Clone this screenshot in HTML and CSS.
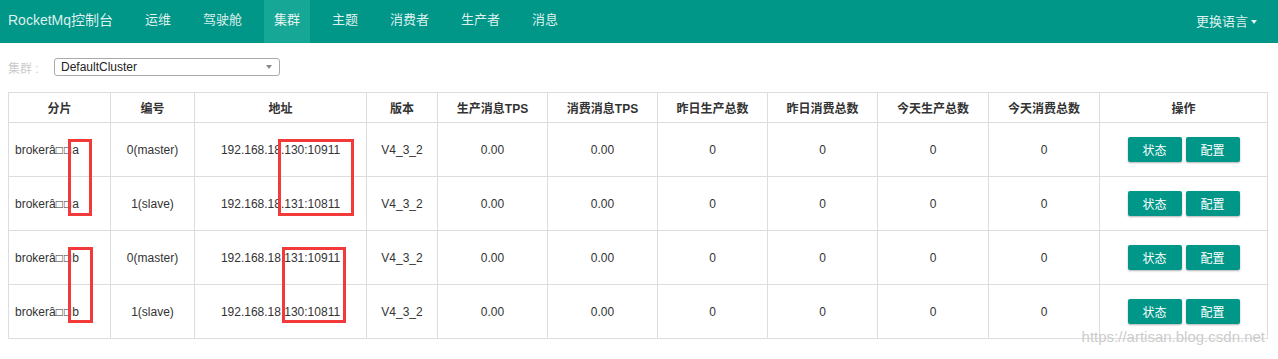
FILE: index.html
```html
<!DOCTYPE html>
<html lang="zh-CN">
<head>
  <meta charset="UTF-8" />
  <title>RocketMq控制台</title>
  <link rel="stylesheet" href="styles.css">
</head>
<body>

  <div class="navbar">
    <div class="brand">RocketMq控制台</div>
    <ul class="nav">
      <li>运维</li>
      <li>驾驶舱</li>
      <li class="active">集群</li>
      <li>主题</li>
      <li>消费者</li>
      <li>生产者</li>
      <li>消息</li>
    </ul>
    <div class="lang">更换语言 <span class="caret"></span></div>
  </div>

  <div class="content">
    <div class="filter">
      <span class="label">集群 :</span>
      <div class="select">
        <span>DefaultCluster</span>
        <span class="caret dark"></span>
      </div>
    </div>

    <div class="table-wrap">
      <table class="cluster">
        <colgroup>
          <col style="width:102px"><col style="width:84px"><col style="width:172px"><col style="width:71px">
          <col style="width:110px"><col style="width:110px"><col style="width:110px"><col style="width:110px">
          <col style="width:111px"><col style="width:111px"><col style="width:168px">
        </colgroup>
        <thead>
          <tr>
            <th>分片</th><th>编号</th><th>地址</th><th>版本</th><th>生产消息TPS</th><th>消费消息TPS</th>
            <th>昨日生产总数</th><th>昨日消费总数</th><th>今天生产总数</th><th>今天消费总数</th><th>操作</th>
          </tr>
        </thead>
        <tbody>
          <tr>
            <td class="left">brokerâ<span class="bad">□□</span>a</td><td>0(master)</td><td>192.168.18.130:10911</td><td>V4_3_2</td>
            <td>0.00</td><td>0.00</td><td>0</td><td>0</td><td>0</td><td>0</td>
            <td><button class="btn">状态</button><button class="btn">配置</button></td>
          </tr>
          <tr>
            <td class="left">brokerâ<span class="bad">□□</span>a</td><td>1(slave)</td><td>192.168.18.131:10811</td><td>V4_3_2</td>
            <td>0.00</td><td>0.00</td><td>0</td><td>0</td><td>0</td><td>0</td>
            <td><button class="btn">状态</button><button class="btn">配置</button></td>
          </tr>
          <tr>
            <td class="left">brokerâ<span class="bad">□□</span>b</td><td>0(master)</td><td>192.168.18.131:10911</td><td>V4_3_2</td>
            <td>0.00</td><td>0.00</td><td>0</td><td>0</td><td>0</td><td>0</td>
            <td><button class="btn">状态</button><button class="btn">配置</button></td>
          </tr>
          <tr>
            <td class="left">brokerâ<span class="bad">□□</span>b</td><td>1(slave)</td><td>192.168.18.130:10811</td><td>V4_3_2</td>
            <td>0.00</td><td>0.00</td><td>0</td><td>0</td><td>0</td><td>0</td>
            <td><button class="btn">状态</button><button class="btn">配置</button></td>
          </tr>
        </tbody>
      </table>

      <!-- red annotation boxes drawn over the screenshot -->
      <div class="mark" style="left:60px;top:47px;width:24px;height:77px"></div>
      <div class="mark" style="left:270px;top:47px;width:76px;height:77px"></div>
      <div class="mark" style="left:60px;top:155px;width:25px;height:76px"></div>
      <div class="mark" style="left:274px;top:155px;width:64px;height:76px"></div>

      <div class="watermark">https://artisan.blog.csdn.net</div>
    </div>
  </div>

</body>
</html>
```

FILE: styles.css
```css
body {
  margin: 0;
  min-height: 359px;
  font-family: "Liberation Sans", Arial, "Noto Sans CJK SC", sans-serif;
  font-size: 12px;
  color: #333;
  background: #fff;
}

.navbar {
  display: flex;
  align-items: stretch;
  height: 43px;
  background: #009688;
  color: rgba(255, 255, 255, 0.88);
}

.brand {
  font-size: 14px;
  line-height: 40px;
  padding-left: 8px;
  width: 117px;
}

.nav {
  display: flex;
  list-style: none;
  margin: 0;
  padding: 0 0 0 10px;
  gap: 12px;
  flex: 1;
}

.nav li {
  font-size: 13px;
  line-height: 40px;
  padding: 0 10px;
}

.nav li.active {
  background: #17a797;
  color: #e6f5f3;
}

.lang {
  font-size: 13px;
  line-height: 38px;
  padding-right: 21px;
  display: flex;
  align-items: center;
  gap: 3px;
}

.caret {
  display: inline-block;
  width: 0;
  height: 0;
  border-left: 3px solid transparent;
  border-right: 3px solid transparent;
  border-top: 4px solid rgba(255, 255, 255, 0.88);
}

.caret.dark {
  border-top-color: #888;
}

.content {
  padding: 15px 10px 21px 8px;
}

.filter {
  display: flex;
  align-items: center;
  height: 18px;
}

.label {
  color: #ccc;
  width: 46px;
}

.select {
  display: flex;
  align-items: center;
  justify-content: space-between;
  width: 211px;
  height: 16px;
  padding: 0 7px 0 6px;
  border: 1px solid #aaa;
  border-radius: 3px;
  color: #222;
  background: #fff;
}

.table-wrap {
  position: relative;
  margin-top: 16px;
}

.cluster {
  table-layout: fixed;
  border-collapse: collapse;
  width: 1260px;
}

.cluster th,
.cluster td {
  border: 1px solid #ddd;
  text-align: center;
  vertical-align: middle;
  padding: 0 6px;
  white-space: nowrap;
}

.cluster th {
  height: 29px;
  font-weight: bold;
}

.cluster td {
  height: 53px;
}

.cluster td.left {
  text-align: left;
}

.bad {
  letter-spacing: 1px;
}

.btn {
  font-family: "Liberation Sans", "Noto Sans CJK SC", sans-serif;
  font-size: 12px;
  width: 54px;
  height: 25px;
  margin: 0 2px;
  padding: 0;
  border: none;
  border-radius: 2px;
  background: #009688;
  color: #fff;
  box-shadow: 0 1px 2px rgba(0, 0, 0, 0.3);
}

.mark {
  position: absolute;
  box-sizing: border-box;
  border: 3px solid #f23a3a;
}

.watermark {
  position: absolute;
  right: 3px;
  top: 236px;
  font-size: 15px;
  color: #ccc;
}
```
